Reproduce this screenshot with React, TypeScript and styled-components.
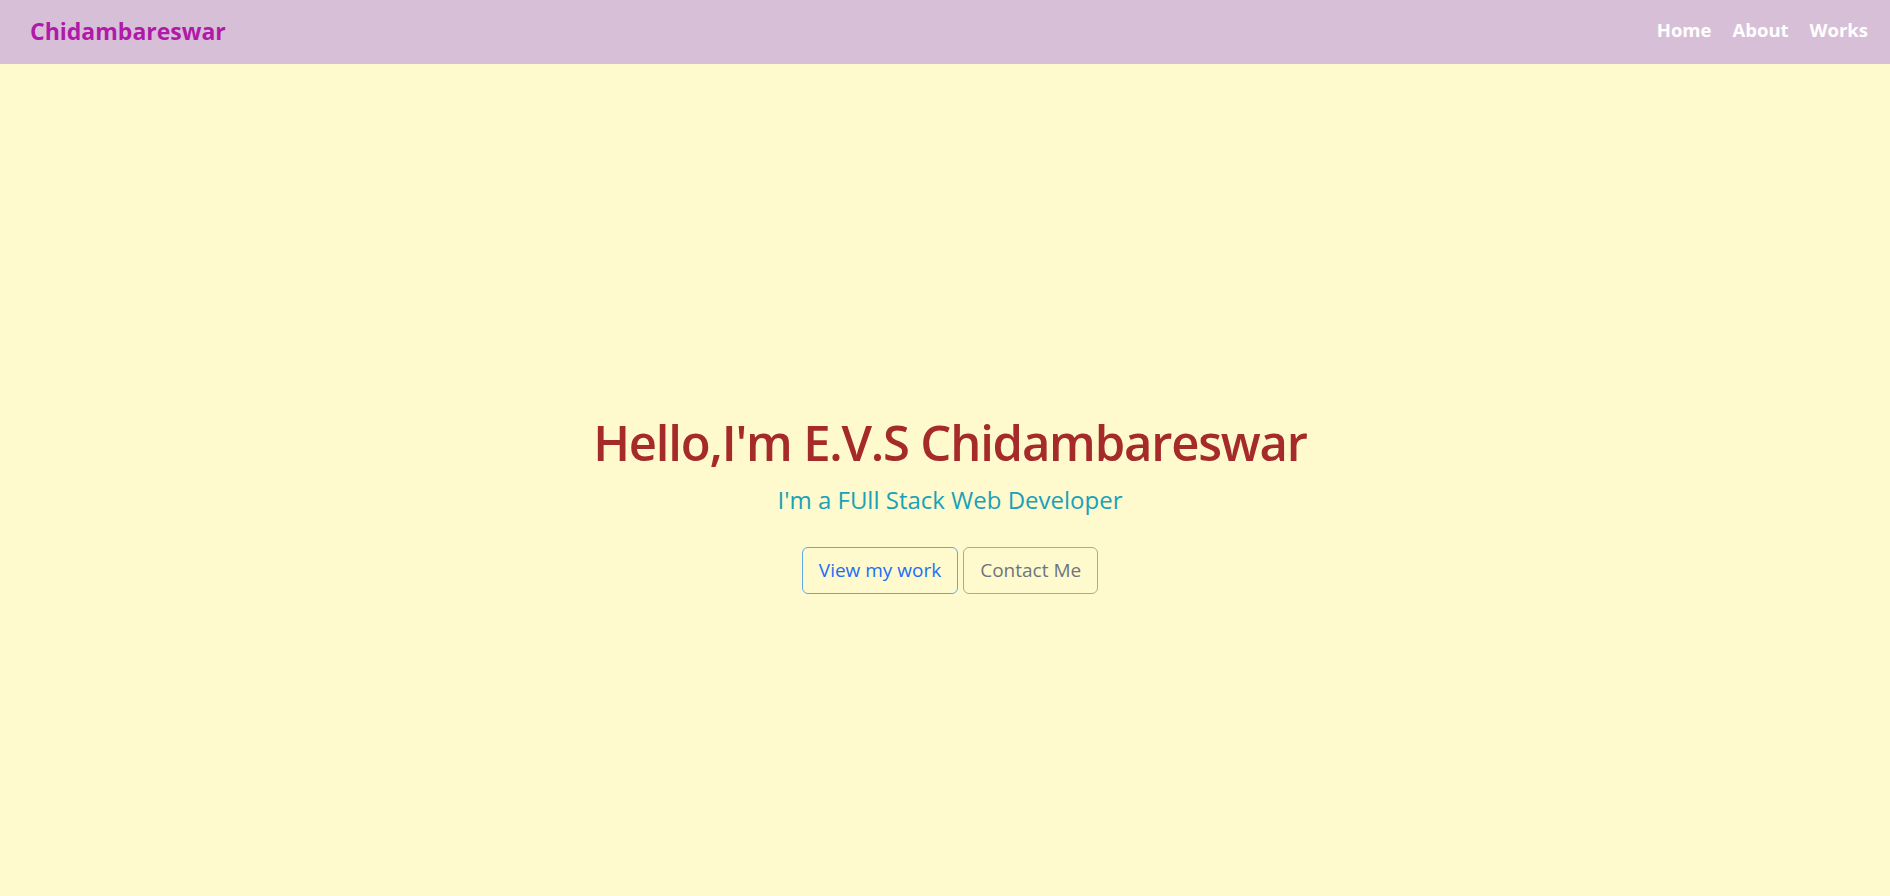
import React from "react";
import styled, { createGlobalStyle } from "styled-components";

const GlobalStyle = createGlobalStyle`
  html, body {
    margin: 0;
    padding: 0;
    background: #fffacd;
    font-family: "Open Sans", "Noto Sans", sans-serif;
  }
  * { box-sizing: border-box; }
`;

const Page = styled.div`
  min-height: 100vh;
  background: #fffacd;
`;

const Navbar = styled.nav`
  height: 64px;
  background: #d8bfd8;
  display: flex;
  align-items: center;
  justify-content: space-between;
  padding: 0 22px 0 30px;
`;

const Brand = styled.a`
  font-size: 23px;
  font-weight: 700;
  color: #b01aa8;
  text-decoration: none;
  line-height: 1;
  margin-top: -2px;
`;

const NavLinks = styled.div`
  display: flex;
  gap: 21px;
  align-items: center;
`;

const NavLink = styled.a`
  font-size: 18.5px;
  font-weight: 700;
  color: #ffffff;
  text-decoration: none;
  line-height: 1;
  margin-top: -4px;
`;

const Hero = styled.section`
  display: flex;
  flex-direction: column;
  align-items: center;
  padding: 346px 0 0 10px;
`;

const Title = styled.h1`
  margin: 0;
  font-size: 49px;
  line-height: 64px;
  font-weight: 600;
  letter-spacing: -1.2px;
  color: #a52a2a;
`;

const Subtitle = styled.p`
  margin: 11px 0 0;
  font-size: 24px;
  line-height: 30px;
  font-weight: 400;
  color: #17a2b8;
`;

const Actions = styled.div`
  display: flex;
  gap: 5px;
  margin-top: 32px;
`;

const Button = styled.button<{ $variant: "primary" | "secondary" }>`
  font-family: inherit;
  font-size: 19px;
  line-height: 29px;
  padding: 8px 16px;
  border-radius: 6px;
  background: transparent;
  cursor: pointer;
  border: 1px solid ${(p) => (p.$variant === "primary" ? "#5ea9e6" : "#a9a99e")};
  color: ${(p) => (p.$variant === "primary" ? "#1a6ff5" : "#6c757d")};
`;

export default function App() {
  return (
    <Page>
      <GlobalStyle />
      <Navbar>
        <Brand href="#">Chidambareswar</Brand>
        <NavLinks>
          <NavLink href="#">Home</NavLink>
          <NavLink href="#">About</NavLink>
          <NavLink href="#">Works</NavLink>
        </NavLinks>
      </Navbar>
      <Hero>
        <Title>Hello,I'm E.V.S Chidambareswar</Title>
        <Subtitle>I'm a FUll Stack Web Developer</Subtitle>
        <Actions>
          <Button $variant="primary">View my work</Button>
          <Button $variant="secondary">Contact Me</Button>
        </Actions>
      </Hero>
    </Page>
  );
}
